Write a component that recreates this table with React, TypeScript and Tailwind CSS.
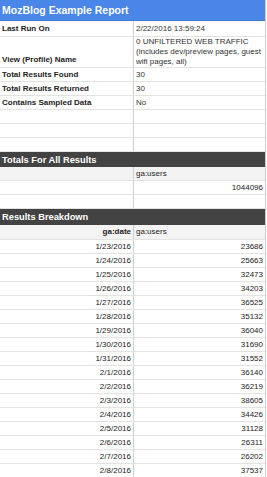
import React from 'react';

const info = [
    { label: 'Total Results Found', value: '30' },
    { label: 'Total Results Returned', value: '30' },
    { label: 'Contains Sampled Data', value: 'No' },
];

const breakdown = [
    ['1/23/2016', '23686'],
    ['1/24/2016', '25663'],
    ['1/25/2016', '32473'],
    ['1/26/2016', '34203'],
    ['1/27/2016', '36525'],
    ['1/28/2016', '35132'],
    ['1/29/2016', '36040'],
    ['1/30/2016', '31690'],
    ['1/31/2016', '31552'],
    ['2/1/2016', '36140'],
    ['2/2/2016', '36219'],
    ['2/3/2016', '38605'],
    ['2/4/2016', '34426'],
    ['2/5/2016', '31128'],
    ['2/6/2016', '26311'],
    ['2/7/2016', '26202'],
    ['2/8/2016', '37537'],
];

const Row: React.FC<{ h?: string; bg?: string; children?: React.ReactNode }> = ({ h = 'h-[14px]', bg = '', children }) => (
    <div className={`flex ${h} ${bg} border-b border-[#e2e2e2]`}>{children}</div>
);

const Left: React.FC<{ className?: string; children?: React.ReactNode }> = ({ className = '', children }) => (
    <div className={`w-[134px] shrink-0 border-r border-[#cfcfcf] px-[2px] flex ${className}`}>{children}</div>
);

const Right: React.FC<{ className?: string; children?: React.ReactNode }> = ({ className = '', children }) => (
    <div className={`flex-1 px-[2px] flex ${className}`}>{children}</div>
);

const SectionHeader: React.FC<{ h: string; title: string }> = ({ h, title }) => (
    <div className={`${h} bg-[#434343] text-white font-bold text-[9.3px] px-[2px] flex items-center`}>{title}</div>
);

export default function App() {
    return (
        <div className="w-[266px] border-r border-[#cfcfcf] bg-white text-[8px] leading-[10px] text-[#222] overflow-hidden" style={{ fontFamily: '"Liberation Sans", Arial, sans-serif' }}>
            <div className="h-[21px] bg-[#4a86e8] border-b border-[#3f78d6] text-white font-bold text-[10.5px] px-[2px] flex items-center">
                MozBlog Example Report
            </div>

            <Row h="h-[16px]">
                <Left className="items-center font-bold">Last Run On</Left>
                <Right className="items-center text-[#333]">2/22/2016 13:59:24</Right>
            </Row>
            <Row h="h-[31px]">
                <Left className="items-end pb-[2px] font-bold">View (Profile) Name</Left>
                <Right className="items-start text-[#333]">
                    <span>
                        0 UNFILTERED WEB TRAFFIC<br />
                        (includes dev/preview pages, guest<br />
                        wifi pages, all)
                    </span>
                </Right>
            </Row>
            {info.map((r) => (
                <Row key={r.label}>
                    <Left className="items-center font-bold">{r.label}</Left>
                    <Right className="items-center text-[#333]">{r.value}</Right>
                </Row>
            ))}
            {[0, 1, 2].map((i) => (
                <Row key={i}>
                    <Left />
                    <Right />
                </Row>
            ))}

            <SectionHeader h="h-[15px]" title="Totals For All Results" />
            <Row bg="bg-[#f3f3f3]">
                <Left />
                <Right className="items-center">ga:users</Right>
            </Row>
            <Row>
                <Left />
                <Right className="items-center justify-end">1044096</Right>
            </Row>
            <Row>
                <Left />
                <Right />
            </Row>

            <SectionHeader h="h-[16px]" title="Results Breakdown" />
            <Row h="h-[15px]" bg="bg-[#f3f3f3]">
                <Left className="items-center justify-end font-bold">ga:date</Left>
                <Right className="items-center">ga:users</Right>
            </Row>
            {breakdown.map(([d, u]) => (
                <Row key={d}>
                    <Left className="items-center justify-end">{d}</Left>
                    <Right className="items-center justify-end">{u}</Right>
                </Row>
            ))}
        </div>
    );
}
